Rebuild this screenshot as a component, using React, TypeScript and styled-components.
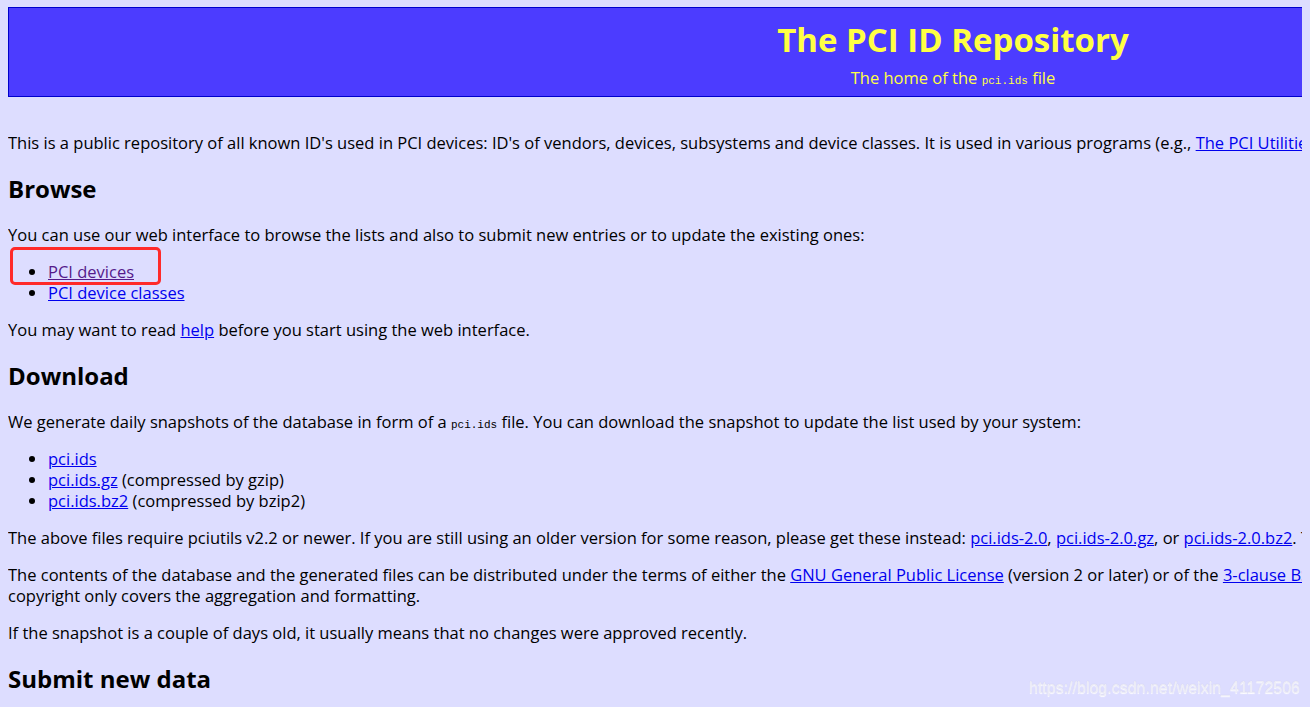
import React from "react";
import styled, { createGlobalStyle } from "styled-components";

const GlobalStyle = createGlobalStyle`
  html, body {
    background-color: #ddddff;
  }
  body {
    margin: 7px 8px 0 8px;
    overflow: hidden;
    color: #000000;
    font-family: "Open Sans", "Noto Sans", sans-serif;
    font-size: 16.5px;
    line-height: 21px;
  }
`;

const Page = styled.div`
  position: relative;
  width: 1890px;
`;

const Header = styled.div`
  background-color: #4c3cff;
  border: 1px solid #0000cc;
  color: #ffff44;
  text-align: center;
  padding: 10px 0 8px 0;
  margin-bottom: 35px;
`;

const Title = styled.h1`
  margin: 0 0 5px 0;
  font-size: 33px;
  line-height: 44px;
  font-weight: 700;
`;

const Subtitle = styled.div`
  line-height: 21px;
`;

const Mono = styled.code`
  font-family: "Liberation Mono", "DejaVu Sans Mono", monospace;
  font-size: 11px;
  line-height: 0;
`;

const Para = styled.p<{ $nowrap?: boolean }>`
  margin: 16px 0;
  white-space: ${p => (p.$nowrap ? "nowrap" : "normal")};
`;

const Heading = styled.h2`
  margin: 20px 0 19px 0;
  font-size: 24px;
  line-height: 32px;
  font-weight: 700;
`;

const List = styled.ul`
  margin: 16px 0;
  padding-left: 40px;
`;

const Link = styled.a<{ $visited?: boolean }>`
  color: ${p => (p.$visited ? "#551a8b" : "#0000ee")};
  text-decoration: underline;
`;

// red annotation drawn over the first browse link
const Highlight = styled.div`
  position: absolute;
  left: 2px;
  top: 240px;
  width: 145px;
  height: 32px;
  border: 3px solid #ff2a2a;
  border-radius: 5px;
`;

const Watermark = styled.div`
  position: fixed;
  right: 10px;
  bottom: 9px;
  font-family: "Liberation Sans", Arial, sans-serif;
  font-size: 16px;
  color: #ececf8;
  text-shadow: 0 1px 1px #ffffff, 0 0 1px #c4c4dc;
`;

const App = () => {
  return (
    <>
      <GlobalStyle />
      <Page>
        <Header>
          <Title>The PCI ID Repository</Title>
          <Subtitle>
            The home of the <Mono>pci.ids</Mono> file
          </Subtitle>
        </Header>

        <Para $nowrap>
          This is a public repository of all known ID's used in PCI devices: ID's of vendors, devices,
          subsystems and device classes. It is used in various programs (e.g.,{" "}
          <Link href="#">The PCI Utilities</Link>) to display full human-readable names instead of
          cryptic numeric codes.
        </Para>

        <Heading>Browse</Heading>
        <Para>
          You can use our web interface to browse the lists and also to submit new entries or to
          update the existing ones:
        </Para>
        <List>
          <li>
            <Link href="#" $visited>
              PCI devices
            </Link>
          </li>
          <li>
            <Link href="#">PCI device classes</Link>
          </li>
        </List>
        <Para>
          You may want to read <Link href="#">help</Link> before you start using the web interface.
        </Para>

        <Heading>Download</Heading>
        <Para>
          We generate daily snapshots of the database in form of a <Mono>pci.ids</Mono> file. You
          can download the snapshot to update the list used by your system:
        </Para>
        <List>
          <li>
            <Link href="#">pci.ids</Link>
          </li>
          <li>
            <Link href="#">pci.ids.gz</Link> (compressed by gzip)
          </li>
          <li>
            <Link href="#">pci.ids.bz2</Link> (compressed by bzip2)
          </li>
        </List>
        <Para $nowrap>
          The above files require pciutils v2.2 or newer. If you are still using an older version
          for some reason, please get these instead: <Link href="#">pci.ids-2.0</Link>,{" "}
          <Link href="#">pci.ids-2.0.gz</Link>, or <Link href="#">pci.ids-2.0.bz2</Link>. The old
          files are no longer updated.
        </Para>
        <Para>
          The contents of the database and the generated files can be distributed under the terms
          of either the <Link href="#">GNU General Public License</Link> (version 2 or later) or of
          the <Link href="#">3-clause BSD License</Link>. The database is a compilation of facts, so
          the
          <br />
          copyright only covers the aggregation and formatting.
        </Para>
        <Para>
          If the snapshot is a couple of days old, it usually means that no changes were approved
          recently.
        </Para>

        <Heading>Submit new data</Heading>

        <Highlight />
      </Page>
      <Watermark>https://blog.csdn.net/weixin_41172506</Watermark>
    </>
  );
};

export default App;
